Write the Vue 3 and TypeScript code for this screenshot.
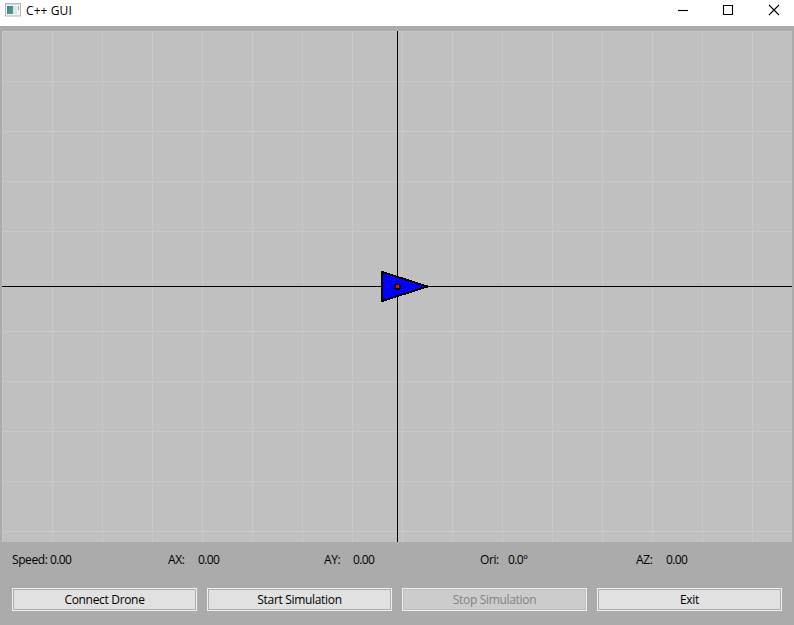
<script setup lang="ts">
interface Reading { label: string; value: string; gap: number }
interface Action { text: string; disabled?: boolean }

const readings: Reading[] = [
  { label: 'Speed:', value: '0.00', gap: 38 },
  { label: 'AX:', value: '0.00', gap: 30 },
  { label: 'AY:', value: '0.00', gap: 29 },
  { label: 'Ori:', value: '0.0°', gap: 28 },
  { label: 'AZ:', value: '0.00', gap: 30 },
]
const actions: Action[] = [
  { text: 'Connect Drone' },
  { text: 'Start Simulation' },
  { text: 'Stop Simulation', disabled: true },
  { text: 'Exit' },
]
const columns = Array.from({ length: 16 }, (_, i) => i * 50)
const rows = Array.from({ length: 11 }, (_, i) => i * 50)
</script>

<template>
  <div class="window">
    <header class="titlebar">
      <svg class="app-icon" width="16" height="14" viewBox="0 0 16 14">
        <defs>
          <linearGradient id="screen" x1="0" y1="0" x2="1" y2="1">
            <stop offset="0" stop-color="#4b78a8" />
            <stop offset="1" stop-color="#48a878" />
          </linearGradient>
        </defs>
        <rect x="0.5" y="0.5" width="15" height="12.5" fill="#f0f2f4" stroke="#b4b9c0" />
        <rect x="1" y="1" width="14" height="1" fill="#d5dce5" />
        <rect x="2" y="3" width="6" height="8" fill="url(#screen)" />
        <rect x="8" y="3" width="4" height="8" fill="#dfe5e6" />
        <rect x="13" y="3" width="1" height="4" fill="#8fb9a8" />
      </svg>
      <span class="title">C++ GUI</span>
      <div class="controls">
        <svg width="10" height="10" viewBox="0 0 10 10"><path d="M0 5.5H10" /></svg>
        <svg width="10" height="10" viewBox="0 0 10 10"><path d="M.5 .5H9.5V9.5H.5Z" /></svg>
        <svg width="10" height="10" viewBox="0 0 10 10" class="close"><path d="M0 0L10 10M10 0L0 10" /></svg>
      </div>
    </header>
    <main>
      <svg class="field" width="790" height="511" viewBox="0 0 790 511">
        <rect width="790" height="511" fill="#c0c0c0" />
        <rect v-for="x in columns" :key="'c' + x" :x="x" y="0" width="1" height="511" fill="#c8c8c8" />
        <rect v-for="y in rows" :key="'r' + y" x="0" :y="y" width="790" height="1" fill="#c8c8c8" />
        <path d="M395.5 0V511M0 255.5H790" stroke="#000" />
        <path class="drone" d="M380 241L380 270L425.5 255.5Z" fill="#00f" stroke="#000" stroke-width="2" stroke-linejoin="round" />
        <circle class="drone" cx="395.5" cy="255.5" r="2.5" fill="#f00" stroke="#000" stroke-width="2" />
      </svg>
      <div class="readings">
        <div v-for="r in readings" :key="r.label" class="reading">
          <span class="label" :style="{ width: r.gap + 'px' }">{{ r.label }}</span><span class="value">{{ r.value }}</span>
        </div>
      </div>
      <div class="actions">
        <button v-for="a in actions" :key="a.text" :disabled="a.disabled">{{ a.text }}</button>
      </div>
    </main>
  </div>
</template>

<style>
body { background: #ababab; overflow: hidden; }
</style>
<style scoped>
.window { width: 794px; height: 625px; background: #ababab; color: #000; font: 12px/16px "Open Sans", "Noto Sans", sans-serif; letter-spacing: -0.32px; }
.titlebar { display: flex; height: 26px; background: #fff; }
.app-icon { margin: 3px 5px 0; flex: none; }
.title { margin-top: 3px; letter-spacing: 0.1px; }
.controls { display: flex; gap: 35px; margin: 5px 15px 0 auto; }
.controls svg { fill: none; stroke: #000; stroke-width: 1.1; overflow: visible; }
.controls .close { margin-left: 1px; }
main { padding: 5px 2px 0; }
.field { display: block; }
.drone { shape-rendering: crispEdges; }
.readings { display: grid; grid-template-columns: repeat(5, 156px); padding: 10px 0 0 10px; height: 36px; }
.reading { display: flex; white-space: nowrap; letter-spacing: -0.4px; }
.label { flex: none; }
.value { letter-spacing: -0.65px; }
.actions { display: grid; grid-template-columns: repeat(4, 185px); gap: 10px; padding-left: 10px; }
button { box-sizing: border-box; height: 23px; padding: 0; border: 1px solid #f0f0f0; border-radius: 0; background: #e1e1e1; box-shadow: inset 0 0 0 1px #adadad; color: #000; font: inherit; letter-spacing: inherit; }
button:disabled { background: #ccc; box-shadow: inset 0 0 0 1px #bfbfbf; color: #838383; }
</style>
